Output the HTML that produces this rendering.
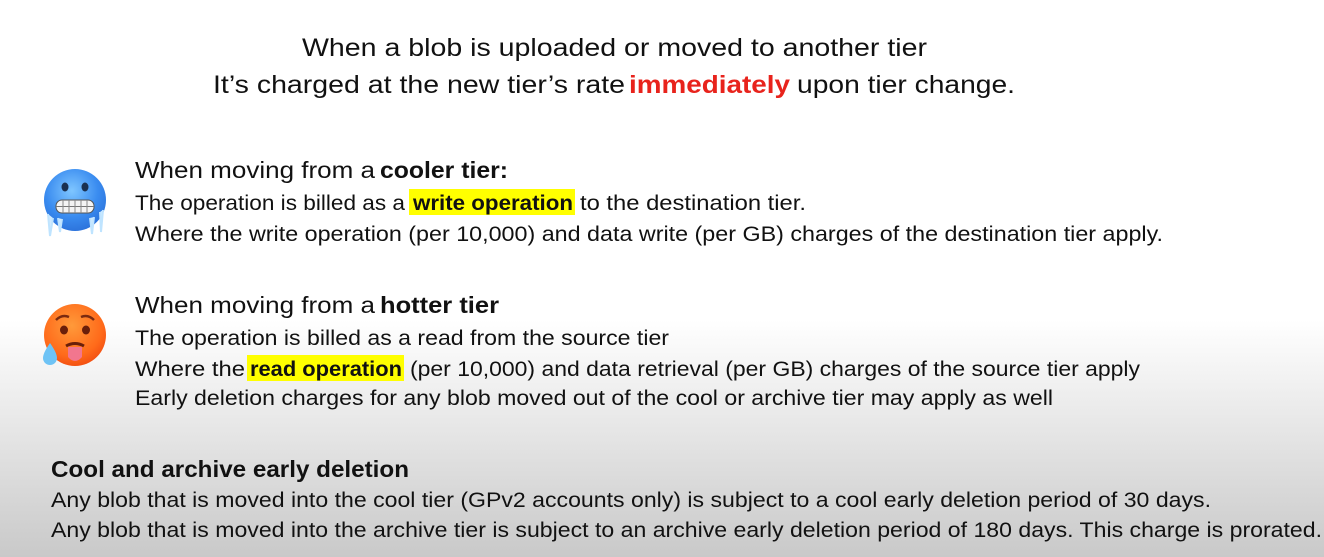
<!DOCTYPE html>
<html><head><meta charset="utf-8"><style>
html,body{margin:0;padding:0}
body{width:1324px;height:557px;overflow:hidden;background:linear-gradient(to bottom,#fff 0,#fff 320px,#e6e6e6 430px,#c9c9c9 557px)}
svg{display:block}
text{font-family:"Liberation Sans",sans-serif;fill:#111}
.b{font-weight:bold}
</style></head><body>
<svg width="1324" height="557" xmlns="http://www.w3.org/2000/svg">
<defs>
<radialGradient id="ice" cx="0.45" cy="0.35" r="0.7"><stop offset="0" stop-color="#7fc6ff"/><stop offset="0.6" stop-color="#3a8cf0"/><stop offset="1" stop-color="#2a6fd8"/></radialGradient>
<radialGradient id="hot" cx="0.45" cy="0.35" r="0.7"><stop offset="0" stop-color="#ff9a3a"/><stop offset="0.7" stop-color="#ff6a1a"/><stop offset="1" stop-color="#f04a10"/></radialGradient>
</defs>
<text x="302" y="56" font-size="25" textLength="625" lengthAdjust="spacingAndGlyphs">When a blob is uploaded or moved to another tier</text>
<text x="213" y="93" font-size="25" textLength="412" lengthAdjust="spacingAndGlyphs">It’s charged at the new tier’s rate</text>
<text x="629" y="93" font-size="25" class="b" style="fill:#e8231c" textLength="161" lengthAdjust="spacingAndGlyphs">immediately</text>
<text x="797" y="93" font-size="25" textLength="218" lengthAdjust="spacingAndGlyphs">upon tier change.</text>

<!-- ice emoji -->
<circle cx="75" cy="200" r="31" fill="url(#ice)"/>
<ellipse cx="65" cy="187" rx="3.5" ry="4.5" fill="#1a3050"/>
<ellipse cx="85" cy="187" rx="3.5" ry="4.5" fill="#1a3050"/>
<rect x="56" y="200" width="38" height="13" rx="6" fill="#f4f4f4" stroke="#555" stroke-width="1"/>
<line x1="56" y1="206.5" x2="94" y2="206.5" stroke="#777"/>
<path d="M63 200v13M69 200v13M75 200v13M81 200v13M87 200v13" stroke="#888"/>
<path d="M48 214l2 22l3-18M58 218l2 14l2-13M90 218l2 16l2-17M100 212l1 20l2-22" stroke="#bfe4ff" stroke-width="2" fill="#cfeaff"/>

<text x="135" y="178" font-size="23" textLength="240" lengthAdjust="spacingAndGlyphs">When moving from a</text>
<text x="380" y="178" font-size="23" class="b" textLength="128" lengthAdjust="spacingAndGlyphs">cooler tier:</text>
<text x="135" y="210" font-size="21" textLength="270" lengthAdjust="spacingAndGlyphs">The operation is billed as a</text>
<rect x="409" y="189" width="166" height="26" fill="#ffff00"/>
<text x="413" y="210" font-size="21" class="b" textLength="160" lengthAdjust="spacingAndGlyphs">write operation</text>
<text x="580" y="210" font-size="21" textLength="226" lengthAdjust="spacingAndGlyphs">to the destination tier.</text>
<text x="135" y="241" font-size="21" textLength="1028" lengthAdjust="spacingAndGlyphs">Where the write operation (per 10,000) and data write (per GB) charges of the destination tier apply.</text>

<!-- hot emoji -->
<circle cx="75" cy="335" r="31" fill="url(#hot)"/>
<path d="M56 320q6-6 13-3M94 320q-6-6-13-3" stroke="#7a2a10" stroke-width="2.5" fill="none"/>
<ellipse cx="64" cy="330" rx="4" ry="4.5" fill="#6a1f0a"/>
<ellipse cx="86" cy="330" rx="4" ry="4.5" fill="#6a1f0a"/>
<path d="M66 346q9-5 18 0" stroke="#6a1f0a" stroke-width="3" fill="none"/>
<path d="M68 347q7 0 14 0v10q-7 8-14 0z" fill="#f2768e"/>
<path d="M50 343q-7 10-7 15a7 7 0 0 0 14 0q0-5-7-15z" fill="#6ec3f5"/>

<text x="135" y="313" font-size="23" textLength="240" lengthAdjust="spacingAndGlyphs">When moving from a</text>
<text x="380" y="313" font-size="23" class="b" textLength="119" lengthAdjust="spacingAndGlyphs">hotter tier</text>
<text x="135" y="345" font-size="21" textLength="534" lengthAdjust="spacingAndGlyphs">The operation is billed as a read from the source tier</text>
<text x="135" y="376" font-size="21" textLength="110" lengthAdjust="spacingAndGlyphs">Where the</text>
<rect x="247" y="355" width="157" height="26" fill="#ffff00"/>
<text x="250" y="376" font-size="21" class="b" textLength="152" lengthAdjust="spacingAndGlyphs">read operation</text>
<text x="410" y="376" font-size="21" textLength="730" lengthAdjust="spacingAndGlyphs">(per 10,000) and data retrieval (per GB) charges of the source tier apply</text>
<text x="135" y="405" font-size="21" textLength="918" lengthAdjust="spacingAndGlyphs">Early deletion charges for any blob moved out of the cool or archive tier may apply as well</text>

<text x="51" y="477" font-size="23" class="b" textLength="358" lengthAdjust="spacingAndGlyphs">Cool and archive early deletion</text>
<text x="51" y="507" font-size="21" textLength="1160" lengthAdjust="spacingAndGlyphs">Any blob that is moved into the cool tier (GPv2 accounts only) is subject to a cool early deletion period of 30 days.</text>
<text x="51" y="537" font-size="21" textLength="1271" lengthAdjust="spacingAndGlyphs">Any blob that is moved into the archive tier is subject to an archive early deletion period of 180 days. This charge is prorated.</text>
</svg>
</body></html>
